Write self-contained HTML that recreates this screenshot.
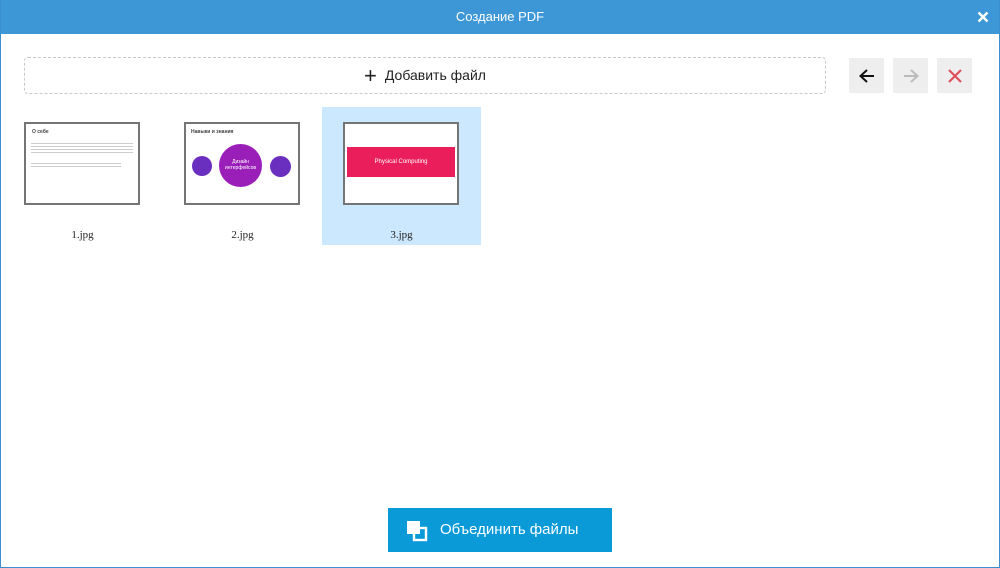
<!DOCTYPE html>
<html><head><meta charset="utf-8"><style>
*{margin:0;padding:0;box-sizing:border-box}
body{width:1000px;height:568px;overflow:hidden;background:#fff;font-family:"Liberation Sans",sans-serif;position:relative}
.frame{position:absolute;inset:0;border:1px solid #3c8fcf;border-top:none}
.title{position:absolute;left:0;top:0;width:1000px;height:34px;background:#3d96d6;color:#fff;font-size:13px;text-align:center;line-height:33px}
.close{position:absolute;right:11px;top:11px}
.add{position:absolute;left:24px;top:57px;width:802px;height:37px;border:1px dashed #c8c8c8;border-radius:4px;text-align:center;line-height:35px;font-size:14px;color:#222}
.nb{position:absolute;top:58px;width:35px;height:35px;background:#eeeeee;display:flex;align-items:center;justify-content:center}
.tile{position:absolute;top:107px;width:159px;height:138px}
.thumb{position:absolute;left:21px;top:15px;width:116px;height:83px;border:2px solid #757575;background:#fff;overflow:hidden}
.lbl{position:absolute;left:0;width:159px;top:122px;text-align:center;font-family:"Liberation Serif",serif;font-size:11px;color:#222}
.merge{position:absolute;left:388px;top:508px;width:224px;height:44px;background:#0a9ad8;color:#fff;font-size:15px;line-height:44px;padding-left:52px}
</style></head><body>
<div class="title">Создание PDF
<svg class="close" width="12" height="12" viewBox="0 0 12 12"><path d="M1.5 1.5L10.5 10.5M10.5 1.5L1.5 10.5" stroke="#fff" stroke-width="2.4"/></svg></div>
<div class="frame"></div>
<div class="add"><span style="font-size:22px;vertical-align:-3px;margin-right:8px">+</span>Добавить файл</div>
<div class="nb" style="left:849px"><svg width="18" height="16" viewBox="0 0 18 16"><path d="M16 8H3M9 2L2.5 8L9 14" stroke="#111" stroke-width="2" fill="none"/></svg></div>
<div class="nb" style="left:893px"><svg width="18" height="16" viewBox="0 0 18 16"><path d="M2 8H15M9 2L15.5 8L9 14" stroke="#bbb" stroke-width="2" fill="none"/></svg></div>
<div class="nb" style="left:937px"><svg width="14" height="14" viewBox="0 0 14 14"><path d="M1 1L13 13M13 1L1 13" stroke="#e0505a" stroke-width="2.2"/></svg></div>

<div class="tile" style="left:3px">
<div class="thumb"><div style="font-size:5px;font-weight:bold;margin:5px 6px;color:#444">О себе</div>
<div style="margin:6px 5px;height:14px;background:repeating-linear-gradient(#fff 0 2px,#ccc 2px 3px)"></div>
<div style="margin:2px 5px;height:8px;width:90px;background:repeating-linear-gradient(#fff 0 2px,#ccc 2px 3px)"></div></div>
<div class="lbl">1.jpg</div></div>

<div class="tile" style="left:163px">
<div class="thumb"><div style="font-size:5px;font-weight:bold;margin:5px 5px;color:#444">Навыки и знания</div>
<div style="position:absolute;left:6px;top:32px;width:20px;height:20px;border-radius:50%;background:#6a2fbf"></div>
<div style="position:absolute;left:33px;top:20px;width:43px;height:43px;border-radius:50%;background:#9a1fb8;color:#fff;font-size:5px;text-align:center;padding-top:15px">Дизайн интерфейсов</div>
<div style="position:absolute;left:84px;top:32px;width:21px;height:21px;border-radius:50%;background:#6a2fbf"></div></div>
<div class="lbl">2.jpg</div></div>

<div class="tile" style="left:322px;background:#cce8ff">
<div class="thumb"><div style="position:absolute;left:2px;top:23px;width:108px;height:30px;background:#e91e5a;color:#fff;font-size:6px;text-align:center;line-height:30px">Physical Computing</div></div>
<div class="lbl">3.jpg</div></div>

<div class="merge"><svg style="position:absolute;left:17px;top:11px" width="24" height="23" viewBox="0 0 24 23"><rect x="2" y="2" width="13" height="13" fill="#fff"/><rect x="9" y="9" width="12" height="12" fill="#0a9ad8" stroke="#fff" stroke-width="2.4"/><rect x="8" y="8" width="7" height="7" fill="#fff"/></svg>Объединить файлы</div>
</body></html>
